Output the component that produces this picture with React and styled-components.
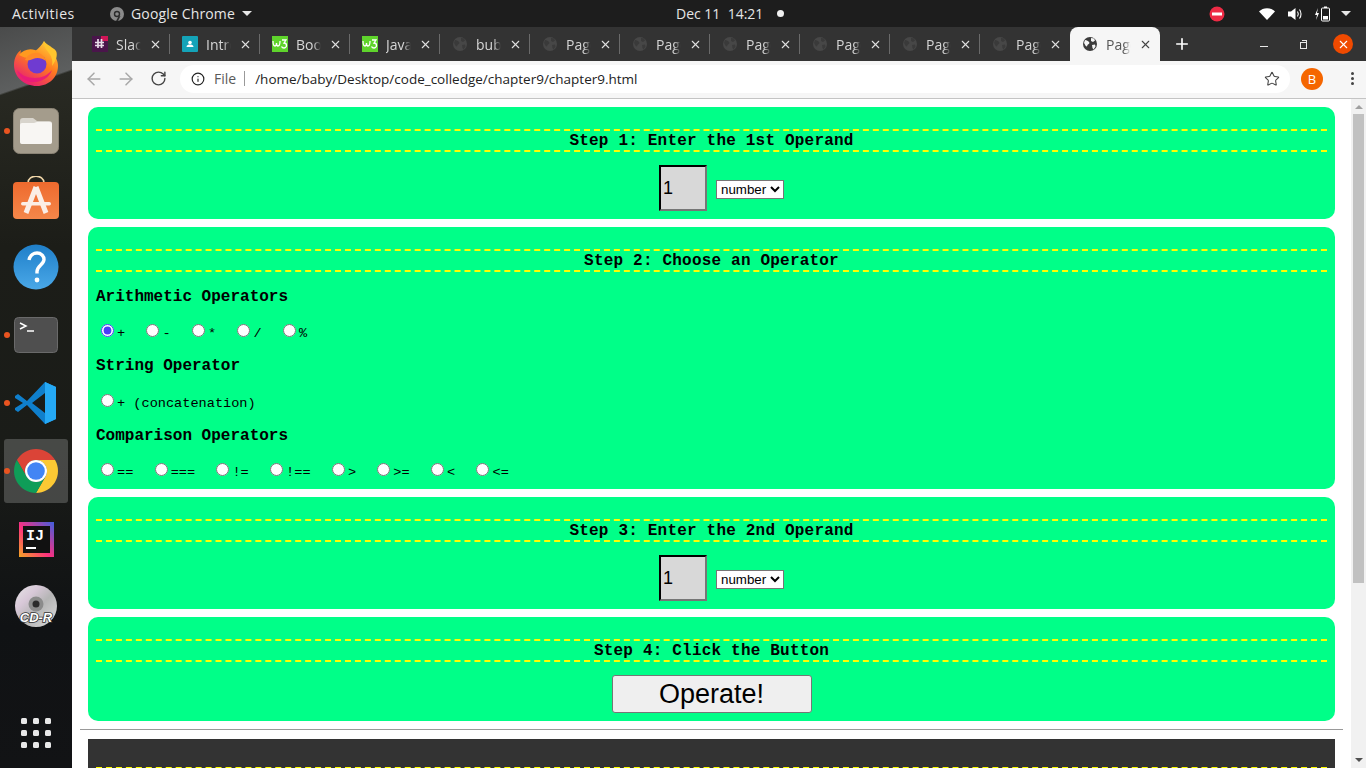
import styled, { createGlobalStyle } from 'styled-components';
import { ArrowLeft, ArrowRight, RotateCw, Info, Star, Plus, X } from 'lucide-react';

const GlobalStyle = createGlobalStyle`
  html, body {
    margin: 0;
    padding: 0;
    height: 100%;
    overflow: hidden;
  }
  body {
    font-family: "Open Sans", "Noto Sans", sans-serif;
  }
`;

// ---- icons ----
function FirefoxIcon() {
  return (
    <svg width="46" height="46" viewBox="0 0 46 46">
      <defs>
        <linearGradient id="ffBody" x1="0.8" y1="0" x2="0.2" y2="1">
          <stop offset="0" stopColor="#ffd43a" />
          <stop offset="0.45" stopColor="#ff7a1f" />
          <stop offset="1" stopColor="#e5127e" />
        </linearGradient>
      </defs>
      <path d="M31 1c1 5 3 7 6 10 5 4 8 9 8 15 0 11-9 20-21 20C11 46 1 37 1 25 1 17 5 12 8 10c-1 3 0 5 1 6 3-4 8-6 13-5 3-2 7-6 9-10z" fill="url(#ffBody)" />
      <path d="M31 1c-1 5 2 8 5 12 3 4 4 8 3 13 4-5 6-11 4-15-2-3-4-3-6-5-3-2-5-3-6-5z" fill="#ffc62e" />
      <path d="M6 15c4-5 10-7 16-5 5 2 9 7 9 10-3-4-8-6-12-5-2 1-3 2-5 3 0 0-2 0-8-3z" fill="#ff9a1f" />
      <circle cx="24" cy="24" r="9.5" fill="#6f3bd1" />
      <path d="M12 20c2-5 8-8 13-7 4 1 7 4 8 8-4-3-9-4-13-2-2 1-6 2-8 1z" fill="#ff8a26" />
      <path d="M4 30c2 8 10 13 19 12 8-1 14-6 16-12-4 5-10 8-17 8-8 0-14-3-18-8z" fill="#e8187c" opacity="0.85" />
    </svg>
  );
}

function FilesIcon() {
  return (
    <svg width="46" height="46" viewBox="0 0 46 46">
      <rect x="0.5" y="0.5" width="45" height="45" rx="6" fill="#a49c8c" stroke="#8a8375" />
      <path d="M7 13a3 3 0 0 1 3-3h10l4 3h12a3 3 0 0 1 3 3v17a3 3 0 0 1-3 3H10a3 3 0 0 1-3-3z" fill="#d8d4cc" />
      <path d="M7 17a2 2 0 0 1 2-2h12l3-1h13a2 2 0 0 1 2 2v18a2 2 0 0 1-2 2H9a2 2 0 0 1-2-2z" fill="#f8f6f3" />
    </svg>
  );
}

function StoreIcon() {
  return (
    <svg width="46" height="46" viewBox="0 0 46 46">
      <defs>
        <linearGradient id="storeBg" x1="0" y1="0" x2="0" y2="1">
          <stop offset="0" stopColor="#ee6a2e" />
          <stop offset="1" stopColor="#f5874a" />
        </linearGradient>
      </defs>
      <path d="M15 7c0-9 16-9 16 0" fill="none" stroke="#f0d6a8" strokeWidth="1.6" />
      <rect x="0" y="6" width="46" height="37" rx="4" fill="url(#storeBg)" />
      <path d="M23 11 13 37M23 11l10 26" stroke="#fbeee6" strokeWidth="5" fill="none" />
      <rect x="8" y="26" width="30" height="3.5" rx="1.7" fill="#fbeee6" />
    </svg>
  );
}

function HelpIcon() {
  return (
    <svg width="46" height="46" viewBox="0 0 46 46">
      <defs>
        <linearGradient id="helpBg" x1="0" y1="0" x2="0" y2="1">
          <stop offset="0" stopColor="#1f7fc9" />
          <stop offset="1" stopColor="#4aa8e8" />
        </linearGradient>
      </defs>
      <circle cx="23" cy="23" r="22.5" fill="url(#helpBg)" />
      <path d="M16 16c1-5 5-7 8-7 4 0 7 3 7 6.500 0 5-7 6-7 12v2" fill="none" stroke="#fff" strokeWidth="3.4" />
      <circle cx="24" cy="36" r="2.4" fill="#fff" />
    </svg>
  );
}

function TerminalIcon() {
  return (
    <svg width="44" height="36" viewBox="0 0 44 36">
      <rect x="0.5" y="0.5" width="43" height="35" rx="4" fill="#4f4f4f" stroke="#6a6a6a" />
      <path d="M6 6l6 3-6 3" fill="none" stroke="#fff" strokeWidth="1.5" />
      <path d="M13 14h7" stroke="#fff" strokeWidth="1.5" />
    </svg>
  );
}

function VsCodeIcon() {
  return (
    <svg width="44" height="44" viewBox="0 0 44 44">
      <path d="M31 1 42 6v32l-11 5z" fill="#1f9cf0" />
      <path d="M31 1 13 20 4 13 1 15v2l8 5-8 5v2l3 2 9-7 18 19 0-11-13-10L31 12z" fill="#0f7fcc" />
      <path d="M31 1v42l11-5V6z" fill="#25a9f5" />
    </svg>
  );
}

function ChromeIcon({ size = 44 }) {
  return (
    <svg width={size} height={size} viewBox="4 4 40 40">
      <path d="M41.32 14A20 20 0 0 0 6.68 14l8.66 15A10 10 0 0 1 24 14z" fill="#db4437" />
      <path d="M41.32 14A20 20 0 0 1 24 44l8.66-15A10 10 0 0 0 24 14z" fill="#fcc934" />
      <path d="M24 44A20 20 0 0 1 6.68 14l8.66 15a10 10 0 0 0 17.32 0z" fill="#0f9d58" />
      <circle cx="24" cy="24" r="10" fill="#fff" />
      <circle cx="24" cy="24" r="8" fill="#4285f4" />
    </svg>
  );
}

function IdeaIcon() {
  return (
    <svg width="35" height="35" viewBox="0 0 35 35">
      <defs>
        <linearGradient id="ijBg" x1="0" y1="1" x2="1" y2="0">
          <stop offset="0" stopColor="#f5a623" />
          <stop offset="0.45" stopColor="#fc2f7f" />
          <stop offset="1" stopColor="#3f5fe0" />
        </linearGradient>
      </defs>
      <rect width="35" height="35" fill="url(#ijBg)" />
      <rect x="4" y="4" width="27" height="27" fill="#111" />
      <text x="7" y="18" fontFamily="Liberation Mono, monospace" fontWeight="700" fontSize="15" fill="#fff">IJ</text>
      <rect x="7" y="25" width="10" height="2" fill="#fff" />
    </svg>
  );
}

function DiscIcon() {
  return (
    <svg width="44" height="44" viewBox="0 0 44 44">
      <defs>
        <linearGradient id="cdBg" x1="0" y1="0" x2="1" y2="1">
          <stop offset="0" stopColor="#e6e6e6" />
          <stop offset="0.3" stopColor="#d8c8d8" />
          <stop offset="0.55" stopColor="#b5b5b5" />
          <stop offset="1" stopColor="#dcdcdc" />
        </linearGradient>
      </defs>
      <circle cx="22" cy="21" r="21" fill="url(#cdBg)" />
      <circle cx="22" cy="19" r="7.500" fill="#8b8b8b" />
      <circle cx="22" cy="19" r="3.500" fill="#2b2b2b" />
      <text x="22" y="37" textAnchor="middle" fontFamily="Liberation Sans, sans-serif" fontStyle="italic" fontWeight="700" fontSize="13" fill="#fff" stroke="#333" strokeWidth="1.6" paintOrder="stroke">CD-R</text>
    </svg>
  );
}

function SlackFavicon() {
  return (
    <svg width="16" height="16" viewBox="0 0 16 16">
      <rect width="16" height="16" fill="#4a154b" />
      <path d="M16 0v5H9V0z" fill="#d01657" />
      <path d="M3 6.500h9M3 9.500h9M6 3v9M9.500 3v9" stroke="#e8dce8" strokeWidth="1.700" />
    </svg>
  );
}

function ClassroomFavicon() {
  return (
    <svg width="16" height="16" viewBox="0 0 16 16">
      <rect width="16" height="16" rx="1" fill="#14a3b8" />
      <circle cx="8" cy="6.500" r="1.800" fill="#fff" />
      <path d="M4.500 11c0-2 2-2.500 3.500-2.500s3.500 .5 3.500 2.500z" fill="#fff" />
    </svg>
  );
}

function W3Favicon() {
  return (
    <svg width="16" height="16" viewBox="0 0 16 16">
      <rect width="16" height="16" fill="#5fd42c" />
      <path d="M1 5c0 3 .5 5 2 5s1.500-2 1.500-3c0 1 0 3 1.500 3s2-2 2-5" fill="none" stroke="#fff" strokeWidth="1.300" />
      <path d="M10 4h4l-2 3c2 0 2.500 1 2.500 2.500S13 12 12 12s-2-.5-2.500-1.500" fill="none" stroke="#fff" strokeWidth="1.300" />
    </svg>
  );
}

function GlobeFavicon({ color, land }) {
  return (
    <svg width="16" height="16" viewBox="0 0 16 16">
      <circle cx="8" cy="8" r="7" fill={color} />
      <path d="M3 4c2 0 3 1 4 2s0 2-1 2.500-.5 2-1.500 2S3 8 2 7zM9 2l3 .5 1 2-2 1.500-2-1zM10 9l3-.5.500 2-2 3-1-1.500z" fill={land} />
    </svg>
  );
}

function ChromeMini() {
  return (
    <svg width="14" height="14" viewBox="0 0 14 14">
      <circle cx="7" cy="7" r="7" fill="#8a8a8a" />
      <circle cx="7" cy="7" r="3.200" fill="#2b2b2b" />
      <circle cx="7" cy="7" r="1.800" fill="#8a8a8a" />
      <path d="M8.500 9.500 6 14h2l2.500-5z" fill="#2b2b2b" />
    </svg>
  );
}

function NoEntry() {
  return (
    <svg width="16" height="16" viewBox="0 0 16 16">
      <circle cx="8" cy="8" r="7.500" fill="#ed2b45" />
      <rect x="3" y="6.500" width="10" height="3" fill="#fff" />
    </svg>
  );
}

function WifiIcon() {
  return (
    <svg width="16" height="12" viewBox="0 0 16 12">
      <path d="M0 3.500C4 -1 12 -1 16 3.500L8 12z" fill="#fff" />
    </svg>
  );
}

function VolumeIcon() {
  return (
    <svg width="15" height="14" viewBox="0 0 15 14">
      <path d="M0 4.500h3L7.500 1v12L3 9.500H0z" fill="#fff" />
      <path d="M9.500 4.500c1 1.500 1 3.500 0 5M11.500 2.500c2 2.500 2 6.500 0 9" fill="none" stroke="#fff" strokeWidth="1.100" />
    </svg>
  );
}

function BatteryIcon() {
  return (
    <svg width="16" height="16" viewBox="0 0 16 16">
      <path d="M3 2 0 9h2l-1 5 3-7H2z" fill="#fff" />
      <rect x="6.500" y="2" width="8" height="13" rx="1" fill="none" stroke="#fff" />
      <rect x="9" y="0.500" width="3" height="1.500" fill="#fff" />
      <rect x="8" y="10" width="5" height="3.500" fill="#fff" />
    </svg>
  );
}

function AppGrid() {
  return (
    <svg width="30" height="30" viewBox="0 0 30 30" fill="#e8e8e8">
      {[0, 12, 24].map(y =>
        [0, 12, 24].map(x => <rect key={`${x}-${y}`} x={x} y={y} width="6" height="6" rx="1.500" />)
      )}
    </svg>
  );
}

// ---- gnome shell ----
const Screen = styled.div`
  width: 1366px;
  height: 768px;
  display: flex;
  flex-direction: column;
  overflow: hidden;
  background: #fff;
`;

const TopBar = styled.div`
  height: 27px;
  flex: none;
  display: flex;
  align-items: center;
  background: #1d1d1d;
  color: #e6e6e6;
  font-size: 14px;
  padding-left: 12px;
`;

const Activities = styled.span`
  width: 63px;
  letter-spacing: 0.5px;
  white-space: nowrap;
`;

const TopApp = styled.div`
  display: flex;
  align-items: center;
  gap: 7px;
  margin-left: 35px;
  width: 520px;
  flex: none;
  letter-spacing: 0.15px;
`;

const Caret = styled.span`
  width: 0;
  height: 0;
  border-left: 5px solid transparent;
  border-right: 5px solid transparent;
  border-top: 5px solid #e6e6e6;
`;

const Clock = styled.div`
  display: flex;
  align-items: center;
  gap: 4px;
  width: 579px;
  flex: none;
  padding-left: 46px;
  box-sizing: border-box;
  white-space: pre;
`;

const Dot = styled.span`
  width: 7px;
  height: 7px;
  border-radius: 50%;
  background: #f0f0f0;
  margin-left: 10px;
`;

const Tray = styled.div`
  display: flex;
  align-items: center;
`;

const TrayItem = styled.div`
  display: flex;
  margin-left: ${p => p.$gap}px;
`;

const Body = styled.div`
  flex: 1;
  display: flex;
  min-height: 0;
`;

const Dock = styled.div`
  width: 72px;
  flex: none;
  display: flex;
  flex-direction: column;
  background:
    linear-gradient(161deg, #4a4b4b 0, #5d5f5f 63px, transparent 65px),
    linear-gradient(180deg, #2c2d28 0, #262720 90px, #1c1d18 220px, #1a1c18 420px, #101214 600px, #121315 741px);
  padding-top: 2px;
`;

const DockItem = styled.div`
  position: relative;
  height: 68px;
  display: flex;
  align-items: center;
  justify-content: center;

  ${p => p.$active && `
    &::before {
      content: '';
      position: absolute;
      left: 4px;
      top: 2px;
      width: 64px;
      height: 64px;
      border-radius: 3px;
      background: rgba(255, 255, 255, 0.2);
    }
  `}

  ${p => p.$running && `
    &::after {
      content: '';
      position: absolute;
      left: 4px;
      top: 31px;
      width: 6px;
      height: 6px;
      border-radius: 50%;
      background: #e95420;
    }
  `}

  svg {
    position: relative;
  }
`;

const DockGrid = styled(DockItem)`
  margin-top: auto;
  height: 70px;
`;

// ---- browser ----
const Browser = styled.div`
  flex: 1;
  min-width: 0;
  display: flex;
  flex-direction: column;
`;

const TabStrip = styled.div`
  height: 34px;
  flex: none;
  background: #333;
  display: flex;
  align-items: stretch;
  padding-left: 8px;
`;

const Tab = styled.div`
  width: 90px;
  box-sizing: border-box;
  position: relative;
  display: flex;
  align-items: center;
  padding-left: 12px;
  font-size: 14px;
  color: ${p => (p.$active ? '#555' : '#d6d6d6')};
  background: ${p => (p.$active ? '#f6f6f6' : 'transparent')};
  border-radius: ${p => (p.$active ? '8px 8px 0 0' : '0')};

  ${p => !p.$active && !p.$last && `
    &::after {
      content: '';
      position: absolute;
      right: 0;
      top: 7px;
      bottom: 7px;
      width: 1px;
      background: #6a6a6a;
    }
  `}
`;

const TabTitle = styled.span`
  width: 27px;
  margin-left: 8px;
  overflow: hidden;
  white-space: nowrap;
  mask-image: linear-gradient(90deg, #000 65%, transparent 92%);
`;

const TabClose = styled.span`
  display: flex;
  margin-left: 6px;
  color: ${p => (p.$active ? '#444' : '#e0e0e0')};
`;

const NewTab = styled.div`
  display: flex;
  align-items: center;
  margin-left: 13px;
  color: #fff;
`;

const WindowButtons = styled.div`
  margin-left: auto;
  display: flex;
  align-items: center;
  padding-right: 13px;
`;

const MinGlyph = styled.span`
  width: 8px;
  height: 1px;
  background: #e8e8e8;
  margin-top: 4px;
`;

const RestoreGlyph = styled.span`
  position: relative;
  width: 5px;
  height: 5px;
  border: 1px solid #e8e8e8;
  margin-left: 32px;
  margin-top: 3px;

  &::after {
    content: '';
    position: absolute;
    left: 1px;
    top: -3px;
    width: 4px;
    height: 4px;
    border-top: 1px solid #e8e8e8;
    border-right: 1px solid #e8e8e8;
  }
`;

const CloseCircle = styled.span`
  width: 20px;
  height: 20px;
  border-radius: 50%;
  background: #f04a00;
  color: #fff;
  display: flex;
  align-items: center;
  justify-content: center;
  margin-left: 26px;
`;

const Toolbar = styled.div`
  height: 38px;
  flex: none;
  box-sizing: border-box;
  background: #f6f6f6;
  border-bottom: 1px solid #c4c4c4;
  display: flex;
  align-items: center;
  padding: 0 0 2px 12px;
`;

const NavButton = styled.span`
  display: flex;
  margin-right: ${p => p.$gap}px;
  color: ${p => (p.$off ? '#a8a8a8' : '#444')};
`;

const Omnibox = styled.div`
  width: 1110px;
  height: 28px;
  box-sizing: border-box;
  margin-left: 1px;
  padding: 0 10px 0 11px;
  background: #fff;
  border-radius: 14px;
  display: flex;
  align-items: center;
  font-size: 14px;
  color: #222;
`;

const FileChip = styled.span`
  color: #5a5a5a;
  margin-left: 9px;
  padding-right: 8px;
  border-right: 1px solid #999;
  line-height: 15px;
`;

const Url = styled.span`
  margin-left: 10px;
  flex: 1;
  font-size: 13.5px;
  white-space: nowrap;
`;

const Avatar = styled.span`
  width: 22px;
  height: 22px;
  border-radius: 50%;
  background: #f56600;
  color: #fff;
  font-size: 13px;
  display: flex;
  align-items: center;
  justify-content: center;
  margin-left: 11px;
`;

const MenuDots = styled.span`
  display: flex;
  flex-direction: column;
  gap: 2px;
  margin-left: 28px;

  i {
    width: 3px;
    height: 3px;
    border-radius: 50%;
    background: #444;
  }
`;

// ---- page ----
const Viewport = styled.div`
  flex: 1;
  min-height: 0;
  display: flex;
  overflow: hidden;
`;

const Page = styled.div`
  flex: 1;
  min-width: 0;
  padding: 8px;
  overflow: hidden;
  font-family: "Liberation Mono", monospace;
  color: #000;
`;

const Card = styled.div`
  margin: 0 8px 8px;
  padding: 22px 8px 8px;
  border-radius: 10px;
  background: #00ff88;
`;

const DarkCard = styled(Card)`
  padding-top: 28px;
  border-radius: 0;
  background: #333;
`;

const StepTitle = styled.h3`
  margin: 0;
  border-top: 2px dashed #ffff00;
  border-bottom: 2px dashed #ffff00;
  padding: 1px 0 0;
  height: 18px;
  font-size: 16px;
  line-height: 18px;
  text-align: center;
  letter-spacing: 0.2px;
`;

const OperandRow = styled.div`
  margin-top: 13px;
  padding-left: 20px;
  display: flex;
  justify-content: center;
  align-items: center;
  gap: 9px;
`;

const NumberBox = styled.input`
  width: 48px;
  height: 46px;
  box-sizing: border-box;
  border: 2px inset #767676;
  border-color: #2b2b2b #767676 #767676 #2b2b2b;
  background: #d8d8d8;
  padding: 1px 2px;
  font-family: "Liberation Sans", sans-serif;
  font-size: 18px;
  color: #000;
`;

const TypeSelect = styled.select`
  width: 68px;
  height: 19px;
  margin-top: 2px;
  font-family: "Liberation Sans", sans-serif;
  font-size: 13.33px;
  background: #fff;
`;

const GroupTitle = styled.h4`
  margin: ${p => (p.$first ? '16px' : '15px')} 0 0;
  font-size: 16px;
  line-height: 18px;
`;

const RadioRow = styled.div`
  margin-top: ${p => (p.$tight ? '15px' : '15.5px')};
  font-size: 13.6px;
  line-height: 17px;
  white-space: nowrap;
`;

const RadioItem = styled.label`
  margin-right: 16.32px;
`;

const RadioDot = styled.input`
  accent-color: #4a3cf7;
`;

const SubmitRow = styled.div`
  margin-top: 13px;
  display: flex;
  justify-content: center;
`;

const OperateButton = styled.button`
  width: 200px;
  height: 38px;
  padding: 0;
  border: 1px solid #767676;
  border-radius: 3px;
  background: #efefef;
  font-family: "Liberation Sans", sans-serif;
  font-size: 27px;
  color: #000;
`;

const Rule = styled.hr`
  margin: 8px 0 9px;
  border: none;
  border-top: 1px solid #999;
`;

// scrollbar on the right of the page
const Scrollbar = styled.div`
  width: 15px;
  flex: none;
  background: #f1f1f1;
  display: flex;
  flex-direction: column;
  align-items: center;
`;

const ScrollArrow = styled.span`
  width: 0;
  height: 0;
  border-left: 4px solid transparent;
  border-right: 4px solid transparent;
  margin: ${p => (p.$down ? 'auto 0 6px' : '6px 0 5px')};
  ${p => (p.$down ? 'border-top: 4px solid #505050;' : 'border-bottom: 4px solid #a0a0a0;')}
`;

const ScrollThumb = styled.div`
  width: 11px;
  height: 469px;
  background: #c1c1c1;
`;

const tabs = [
  { title: 'Slack', icon: <SlackFavicon /> },
  { title: 'Intro', icon: <ClassroomFavicon /> },
  { title: 'Book', icon: <W3Favicon /> },
  { title: 'Java', icon: <W3Favicon /> },
  { title: 'bubble', icon: <GlobeFavicon color="#474747" land="#3a3a3a" /> },
  { title: 'Page', icon: <GlobeFavicon color="#474747" land="#3a3a3a" /> },
  { title: 'Page', icon: <GlobeFavicon color="#474747" land="#3a3a3a" /> },
  { title: 'Page', icon: <GlobeFavicon color="#474747" land="#3a3a3a" /> },
  { title: 'Page', icon: <GlobeFavicon color="#474747" land="#3a3a3a" /> },
  { title: 'Page', icon: <GlobeFavicon color="#474747" land="#3a3a3a" /> },
  { title: 'Page', icon: <GlobeFavicon color="#474747" land="#3a3a3a" />, last: true },
  { title: 'Page', icon: <GlobeFavicon color="#3c3c3c" land="#f6f6f6" />, active: true },
];

function Radios({ name, options, checked, tight }) {
  return (
    <RadioRow $tight={tight}>
      {options.map(o => (
        <RadioItem key={o}>
          <RadioDot type="radio" name={name} defaultChecked={o === checked} />
          {o}
        </RadioItem>
      ))}
    </RadioRow>
  );
}

function Operand({ name }) {
  return (
    <OperandRow>
      <NumberBox name={name} defaultValue="1" />
      <TypeSelect name={name + '-type'} defaultValue="number">
        <option value="number">number</option>
        <option value="string">string</option>
      </TypeSelect>
    </OperandRow>
  );
}

export default function App() {
  return (
    <Screen>
      <GlobalStyle />
      <TopBar>
        <Activities>Activities</Activities>
        <TopApp>
          <ChromeMini />
          <span>Google Chrome</span>
          <Caret />
        </TopApp>
        <Clock>
          <span>Dec 11  14:21</span>
          <Dot />
        </Clock>
        <Tray>
          <TrayItem $gap={0}><NoEntry /></TrayItem>
          <TrayItem $gap={34}><WifiIcon /></TrayItem>
          <TrayItem $gap={13}><VolumeIcon /></TrayItem>
          <TrayItem $gap={12}><BatteryIcon /></TrayItem>
          <TrayItem $gap={10}><Caret /></TrayItem>
        </Tray>
      </TopBar>
      <Body>
        <Dock>
          <DockItem><FirefoxIcon /></DockItem>
          <DockItem $running><FilesIcon /></DockItem>
          <DockItem><StoreIcon /></DockItem>
          <DockItem><HelpIcon /></DockItem>
          <DockItem $running><TerminalIcon /></DockItem>
          <DockItem $running><VsCodeIcon /></DockItem>
          <DockItem $running $active><ChromeIcon /></DockItem>
          <DockItem><IdeaIcon /></DockItem>
          <DockItem><DiscIcon /></DockItem>
          <DockGrid><AppGrid /></DockGrid>
        </Dock>
        <Browser>
          <TabStrip>
            {tabs.map((t, i) => (
              <Tab key={i} $active={t.active} $last={t.last}>
                {t.icon}
                <TabTitle>{t.title}</TabTitle>
                <TabClose $active={t.active}><X size={13} strokeWidth={2} /></TabClose>
              </Tab>
            ))}
            <NewTab><Plus size={18} strokeWidth={2.2} /></NewTab>
            <WindowButtons>
              <MinGlyph />
              <RestoreGlyph />
              <CloseCircle><X size={13} strokeWidth={2} /></CloseCircle>
            </WindowButtons>
          </TabStrip>
          <Toolbar>
            <NavButton $off $gap={12}><ArrowLeft size={20} strokeWidth={1.8} /></NavButton>
            <NavButton $off $gap={14}><ArrowRight size={20} strokeWidth={1.8} /></NavButton>
            <NavButton $gap={12}><RotateCw size={17} strokeWidth={2} /></NavButton>
            <Omnibox>
              <Info size={14} strokeWidth={2} />
              <FileChip>File</FileChip>
              <Url>/home/baby/Desktop/code_colledge/chapter9/chapter9.html</Url>
              <Star size={16} strokeWidth={1.6} color="#444" />
            </Omnibox>
            <Avatar>B</Avatar>
            <MenuDots><i /><i /><i /></MenuDots>
          </Toolbar>
          <Viewport>
            <Page>
              <Card>
                <StepTitle>Step 1: Enter the 1st Operand</StepTitle>
                <Operand name="first" />
              </Card>
              <Card>
                <StepTitle>Step 2: Choose an Operator</StepTitle>
                <GroupTitle $first>Arithmetic Operators</GroupTitle>
                <Radios name="op" tight options={['+', '-', '*', '/', '%']} checked="+" />
                <GroupTitle>String Operator</GroupTitle>
                <Radios name="op" options={['+ (concatenation)']} />
                <GroupTitle>Comparison Operators</GroupTitle>
                <Radios name="op" options={['==', '===', '!=', '!==', '>', '>=', '<', '<=']} />
              </Card>
              <Card>
                <StepTitle>Step 3: Enter the 2nd Operand</StepTitle>
                <Operand name="second" />
              </Card>
              <Card>
                <StepTitle>Step 4: Click the Button</StepTitle>
                <SubmitRow>
                  <OperateButton>Operate!</OperateButton>
                </SubmitRow>
              </Card>
              <Rule />
              <DarkCard>
                <StepTitle />
              </DarkCard>
            </Page>
            <Scrollbar>
              <ScrollArrow />
              <ScrollThumb />
              <ScrollArrow $down />
            </Scrollbar>
          </Viewport>
        </Browser>
      </Body>
    </Screen>
  );
}
